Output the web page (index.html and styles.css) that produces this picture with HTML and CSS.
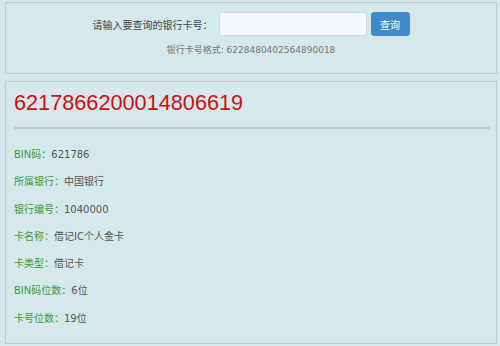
FILE: index.html
```html
<!DOCTYPE html>
<html lang="zh-CN">
<head>
    <meta charset="UTF-8">
    <meta name="viewport" content="width=device-width, initial-scale=1.0">
    <title>银行卡号查询</title>
    <link rel="stylesheet" href="styles.css">
</head>
<body>
    <div class="panel search-panel">
        <form class="search-row">
            <label for="cardno">请输入要查询的银行卡号：</label>
            <input type="text" id="cardno">
            <button type="button" class="btn">查询</button>
        </form>
        <div class="hint">银行卡号格式: 6228480402564890018</div>
    </div>
    <div class="panel result-panel">
        <h1 class="card-no">6217866200014806619</h1>
        <hr>
        <ul class="info">
            <li><span class="key">BIN码：</span>621786</li>
            <li><span class="key">所属银行：</span>中国银行</li>
            <li><span class="key">银行编号：</span>1040000</li>
            <li><span class="key">卡名称：</span>借记IC个人金卡</li>
            <li><span class="key">卡类型：</span>借记卡</li>
            <li><span class="key">BIN码位数：</span>6位</li>
            <li><span class="key">卡号位数：</span>19位</li>
        </ul>
    </div>
</body>
</html>
```

FILE: styles.css
```css
body {
    margin: 0;
    padding: 2px 3px 0 5px;
    background-color: #d5e8ec;
    font-family: "DejaVu Sans", "Noto Sans CJK SC", sans-serif;
    font-size: 10px;
    color: #555555;
}
.panel {
    border: 1px solid #c4cccc;
}
.search-panel {
    height: 72px;
    box-sizing: border-box;
    padding-top: 9px;
}
.search-row {
    display: flex;
    justify-content: center;
    align-items: center;
    margin: 0;
}
.search-row label {
    margin-right: 6px;
    color: #444444;
}
.search-row input {
    width: 148px;
    height: 24px;
    box-sizing: border-box;
    border: 1px solid #d0d8da;
    border-radius: 3px;
    background-color: #f4f8fb;
    margin-right: 4px;
}
.btn {
    width: 39px;
    height: 24px;
    border: none;
    border-radius: 3px;
    background-color: #428bca;
    color: #ffffff;
    font-family: inherit;
    font-size: 10px;
    padding: 0;
}
.hint {
    text-align: center;
    margin-top: 7px;
    font-size: 9px;
    color: #777777;
}
.result-panel {
    margin-top: 7px;
    height: 263px;
    box-sizing: border-box;
    padding: 8px 6px 0 8px;
}
.card-no {
    margin: 0;
    font-family: "Liberation Sans", Arial, sans-serif;
    font-size: 21.7px;
    font-weight: normal;
    color: #d10f0f;
    line-height: 26px;
}
hr {
    border: none;
    border-top: 2px solid #c5cdcd;
    margin: 11px 0 0 0;
}
.info {
    list-style: none;
    margin: 12px 0 0 0;
    padding: 0;
}
.info li {
    line-height: 27.3px;
}
.key {
    color: #3b9b3b;
}
```
